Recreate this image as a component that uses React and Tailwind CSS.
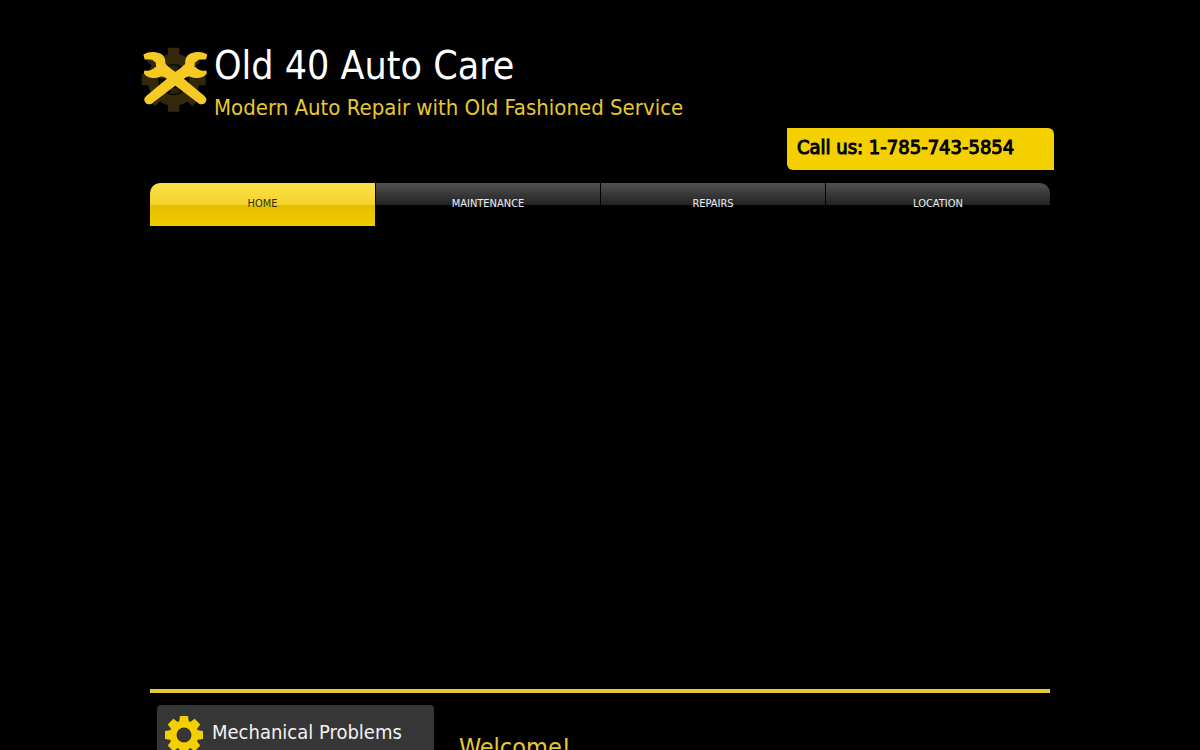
const navItems = [
  { label: "Home", href: "#home" },
  { label: "Maintenance", href: "#maintenance" },
  { label: "Repairs", href: "#repairs" },
  { label: "Location", href: "#location" },
];

const wrenchPath =
  "M13 27 C28 17 57 18 68 31 C75 39 74 48 74 55 C82 64 94 72 106 81 L191 151 C204 162 191 178 177 170 L104 114 C97 108 91 102 83 97 C74 90 66 88 60 90 C44 97 22 94 14 81 L15 76 C24 78 34 76 40 71 L51 63 L50 49 L38 39 C31 37 23 39 16 38 Z";

const teeth = [0, 45, 90, 135, 180, 225, 270, 315];

function Logo() {
  return (
    <svg viewBox="0 0 204 204" className="size-[68px] shrink-0" aria-hidden="true">
      <g fill="#33290a">
        {teeth.map((angle) => (
          <path
            key={angle}
            d="M84 5 H118 V24 L124 40 H78 L84 24 Z"
            transform={`rotate(${angle} 101 101)`}
          />
        ))}
      </g>
      <circle cx="101" cy="101" r="62" fill="none" stroke="#33290a" strokeWidth="32" />
      <circle cx="101" cy="101" r="34" fill="none" stroke="#2b2209" strokeWidth="18" strokeDasharray="27 9" />
      <g fill="#f5ca25" stroke="#f5ca25" strokeWidth="5" strokeLinejoin="round">
        <path d={wrenchPath} />
        <path d={wrenchPath} transform="matrix(-1 0 0 1 212 0)" />
      </g>
    </svg>
  );
}

function GearIcon() {
  return (
    <svg viewBox="0 0 38 38" className="size-[38px] shrink-0" aria-hidden="true">
      <g fill="#f5d000">
        {teeth.map((angle) => (
          <path
            key={angle}
            d="M15 0 H23 L24 7 H14 Z"
            transform={`rotate(${angle} 19 19)`}
          />
        ))}
      </g>
      <circle cx="19" cy="19" r="11" fill="none" stroke="#f5d000" strokeWidth="7" />
    </svg>
  );
}

function Header() {
  return (
    <header>
      <div className="-ml-[10px] flex gap-[6px] pt-[46px]">
        <Logo />
        <div>
          <h1 className="text-[39px] leading-[40px] text-white">Old 40 Auto Care</h1>
          <p className="mt-2 text-[22px] leading-7 text-[#e6c92e]">
            Modern Auto Repair with Old Fashioned Service
          </p>
        </div>
      </div>
      <div className="-mr-1 mt-[6px] flex justify-end">
        <a
          href="tel:17857435854"
          className="h-[42px] w-[267px] rounded-tr-md rounded-bl-md bg-[#f5d000] px-[10px] text-[20px] leading-[38px] text-black [-webkit-text-stroke:1px_black]"
        >
          Call us: 1-785-743-5854
        </a>
      </div>
    </header>
  );
}

function Nav() {
  return (
    <nav className="mt-[13px] overflow-hidden rounded-t-[10px]">
      <ul className="grid grid-cols-4">
        {navItems.map((item, index) => (
          <li key={item.label} className={index > 0 ? "border-l border-black" : ""}>
            <a
              href={item.href}
              className={`block h-[43px] text-center text-[11px] leading-[42px] uppercase ${
                index === 0
                  ? "bg-[linear-gradient(#fce04c_0,#f3d32a_22px,#e5bf00_22px,#f0cc00_100%)] text-[#332b00]"
                  : "bg-[linear-gradient(#505050_0,#222222_22px,#000_22px)] text-[#eeeeee]"
              }`}
            >
              {item.label}
            </a>
          </li>
        ))}
      </ul>
    </nav>
  );
}

function App() {
  return (
    <div className="h-screen overflow-y-auto bg-black font-['DejaVu_Sans_Condensed','DejaVu_Sans',sans-serif] [scrollbar-width:none]">
      <div className="mx-auto max-w-[900px]">
        <Header />
        <Nav />
        <main className="mt-[463px] border-t-4 border-[#e8c835]">
          <div className="flex gap-[25px] pt-3 pl-[7px]">
            <section className="w-[277px] rounded bg-[#363636] px-2 pt-[11px] pb-6">
              <div className="flex items-start gap-[9px]">
                <GearIcon />
                <h2 className="text-[20px] leading-8 text-[#f2f2f2]">Mechanical Problems</h2>
              </div>
            </section>
            <section className="pt-[27px]">
              <h2 className="text-[25px] leading-8 text-[#e8c835]">Welcome!</h2>
            </section>
          </div>
        </main>
      </div>
    </div>
  );
}

export default App;
